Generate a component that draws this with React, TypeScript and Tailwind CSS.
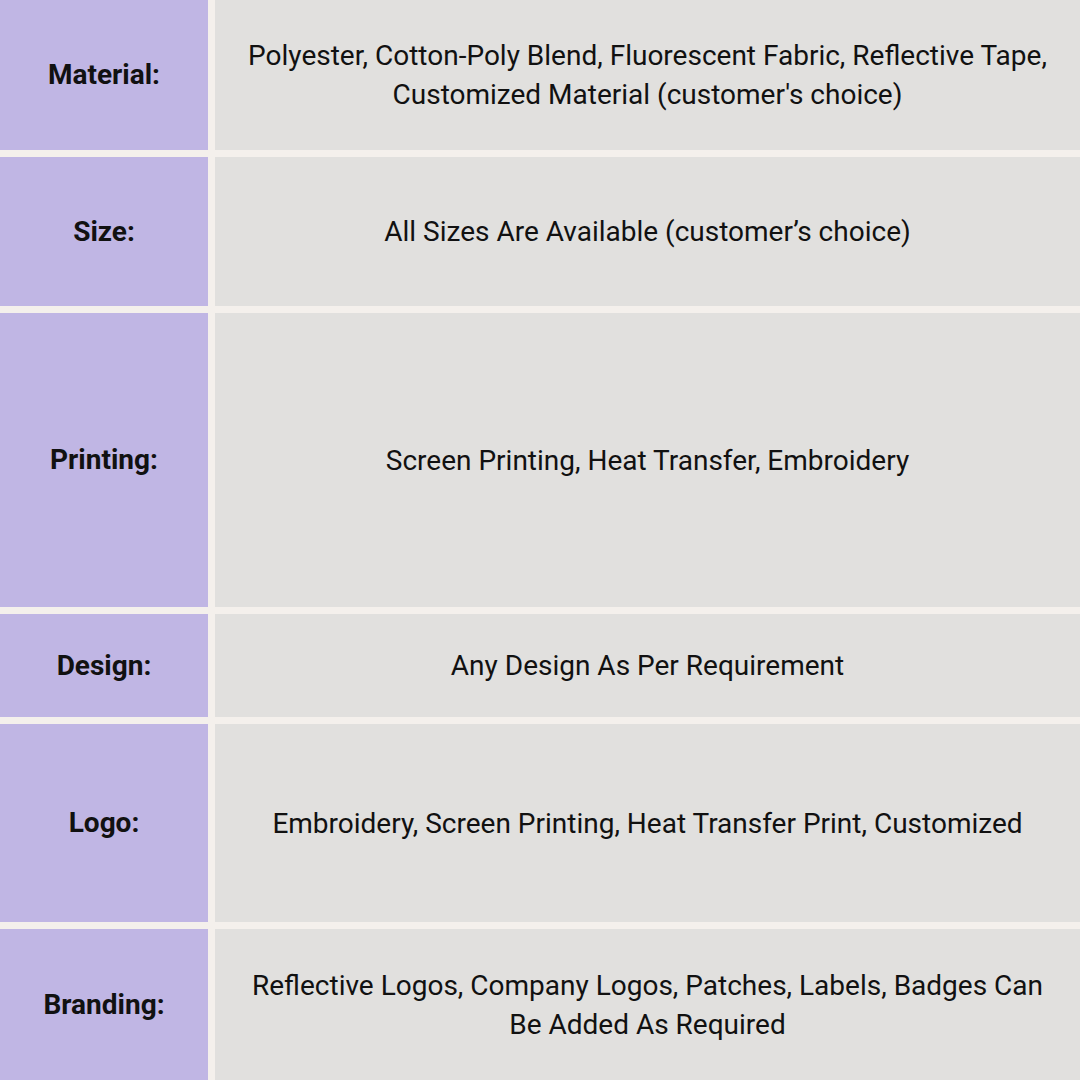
const rows = [
  { label: "Material:", value: "Polyester, Cotton-Poly Blend, Fluorescent Fabric, Reflective Tape, Customized Material (customer's choice)", h: "h-[150px]" },
  { label: "Size:", value: "All Sizes Are Available (customer’s choice)", h: "h-[149px]" },
  { label: "Printing:", value: "Screen Printing, Heat Transfer, Embroidery", h: "h-[294px]" },
  { label: "Design:", value: "Any Design As Per Requirement", h: "h-[103px]" },
  { label: "Logo:", value: "Embroidery, Screen Printing, Heat Transfer Print, Customized", h: "h-[198px]" },
  { label: "Branding:", value: "Reflective Logos, Company Logos, Patches, Labels, Badges Can Be Added As Required", h: "h-[151px]" },
];

export default function App() {
  return (
    <div className="h-[1080px] w-[1080px] overflow-hidden bg-[#f4f0ec] font-['Roboto',sans-serif] text-[#111]">
      <div className="grid grid-cols-[208px_1fr] gap-x-[7px] gap-y-[7px]">
        {rows.map((r) => (
          <div key={r.label} className="contents">
            <div className={`${r.h} flex items-center justify-center bg-[#c0b6e4] text-[28px] font-bold`}>
              {r.label}
            </div>
            <div className={`${r.h} flex items-center justify-center bg-[#e1e0de] px-6 text-center text-[28px] leading-[39px]`}>
              {r.value}
            </div>
          </div>
        ))}
      </div>
    </div>
  );
}
